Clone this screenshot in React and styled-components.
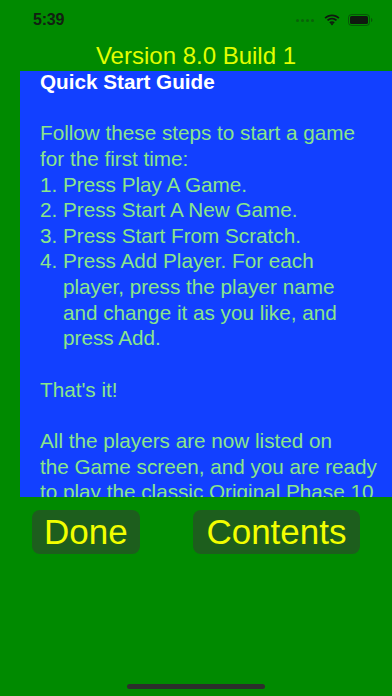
import React from "react";
import styled, { createGlobalStyle } from "styled-components";

const Global = createGlobalStyle`
  html, body { margin: 0; padding: 0; background: #008a00; }
  * { box-sizing: border-box; }
`;

const Screen = styled.div`
  width: 392px;
  height: 696px;
  background: #008a00;
  display: flex;
  flex-direction: column;
  overflow: hidden;
  font-family: "Liberation Sans", Arial, sans-serif;
`;

const StatusBar = styled.div`
  height: 44px;
  display: flex;
  align-items: flex-start;
  justify-content: space-between;
  padding: 11px 19px 0 33px;
`;

const Time = styled.span`
  font-weight: 700;
  font-size: 16px;
  line-height: 18px;
  color: #122012;
  letter-spacing: -0.2px;
`;

const StatusIcons = styled.div`
  display: flex;
  align-items: center;
  gap: 8px;
  height: 18px;
`;

const Dots = styled.div`
  display: flex;
  gap: 2px;
  align-items: center;
  margin-right: 2px;
`;

const Dot = styled.span`
  width: 3px;
  height: 3px;
  border-radius: 50%;
  background: rgba(20, 50, 20, 0.45);
`;

const Title = styled.div`
  text-align: center;
  font-size: 24px;
  line-height: 24px;
  padding-bottom: 3px;
  color: #e2ff00;
`;

const Panel = styled.div`
  margin-left: 20px;
  height: 426px;
  background: #1240ff;
  overflow: hidden;
  padding-left: 20px;
`;

const Text = styled.div`
  margin-top: -2px;
  font-size: 20.7px;
  line-height: 25.64px;
  color: #8ae68a;
  white-space: nowrap;
`;

const Heading = styled.div`
  font-weight: 700;
  color: #ffffff;
`;

const Line = styled.div`
  padding-left: ${(p) => (p.$indent ? "23px" : "0")};
  min-height: 25.64px;
`;

const ButtonRow = styled.div`
  margin-top: 13px;
  display: flex;
  justify-content: space-between;
  padding: 0 32px;
`;

const Button = styled.button`
  height: 44px;
  padding: 0 ${(p) => p.$pad || 12}px;
  border: none;
  border-radius: 8px;
  background: #1d5e1d;
  color: #f2ff00;
  font-family: "Liberation Sans", Arial, sans-serif;
  font-size: 35px;
  line-height: 40px;
  cursor: pointer;
`;

const HomeArea = styled.div`
  margin-top: auto;
  display: flex;
  justify-content: center;
  padding-bottom: 7px;
`;

const HomeBar = styled.div`
  width: 138px;
  height: 5px;
  border-radius: 3px;
  background: #2c2f2c;
`;

const Wifi = () => (
  <svg width="16" height="12" viewBox="0 0 16 12">
    <path d="M8 2.2c2.4 0 4.6.9 6.3 2.5l1.2-1.3C13.5 1.5 10.9.4 8 .4S2.5 1.5.5 3.4l1.2 1.3C3.4 3.1 5.6 2.2 8 2.2z" fill="#0f1a0f" />
    <path d="M8 5.6c1.5 0 2.8.6 3.9 1.5l1.2-1.3C11.7 4.6 9.9 3.8 8 3.8s-3.7.8-5.1 2l1.2 1.3C5.2 6.2 6.5 5.6 8 5.6z" fill="#0f1a0f" />
    <path d="M8 8.9c.7 0 1.3.3 1.7.7L8 11.5 6.3 9.6c.4-.4 1-.7 1.7-.7z" fill="#0f1a0f" />
    <path d="M8 7.2c1.1 0 2 .4 2.7 1.1l-1 1.1C9.3 8.9 8.7 8.7 8 8.7s-1.3.2-1.7.7l-1-1.1C6 7.6 6.9 7.2 8 7.2z" fill="#0f1a0f" />
  </svg>
);

const Battery = () => (
  <svg width="25" height="12" viewBox="0 0 25 12">
    <rect x="0.5" y="0.5" width="21" height="11" rx="3" fill="none" stroke="rgba(15,26,15,0.45)" />
    <rect x="2" y="2" width="18" height="8" rx="1.6" fill="#0f1a0f" />
    <path d="M23 4v4c.8-.3 1.4-1.1 1.4-2S23.8 4.3 23 4z" fill="rgba(15,26,15,0.45)" />
  </svg>
);

const lines = [
  { t: "" },
  { t: "Follow these steps to start a game" },
  { t: "for the first time:" },
  { t: "1. Press Play A Game." },
  { t: "2. Press Start A New Game." },
  { t: "3. Press Start From Scratch." },
  { t: "4. Press Add Player. For each" },
  { t: "player, press the player name", i: true },
  { t: "and change it as you like, and", i: true },
  { t: "press Add.", i: true },
  { t: "" },
  { t: "That's it!" },
  { t: "" },
  { t: "All the players are now listed on" },
  { t: "the Game screen, and you are ready" },
  { t: "to play the classic Original Phase 10" },
];

export default function App() {
  return (
    <>
      <Global />
      <Screen>
        <StatusBar>
          <Time>5:39</Time>
          <StatusIcons>
            <Dots>
              <Dot />
              <Dot />
              <Dot />
              <Dot />
            </Dots>
            <Wifi />
            <Battery />
          </StatusIcons>
        </StatusBar>
        <Title>Version 8.0 Build 1</Title>
        <Panel>
          <Text>
            <Heading>Quick Start Guide</Heading>
            {lines.map((l, idx) => (
              <Line key={idx} $indent={l.i}>
                {l.t}
              </Line>
            ))}
          </Text>
        </Panel>
        <ButtonRow>
          <Button>Done</Button>
          <Button $pad={13.5}>Contents</Button>
        </ButtonRow>
        <HomeArea>
          <HomeBar />
        </HomeArea>
      </Screen>
    </>
  );
}
